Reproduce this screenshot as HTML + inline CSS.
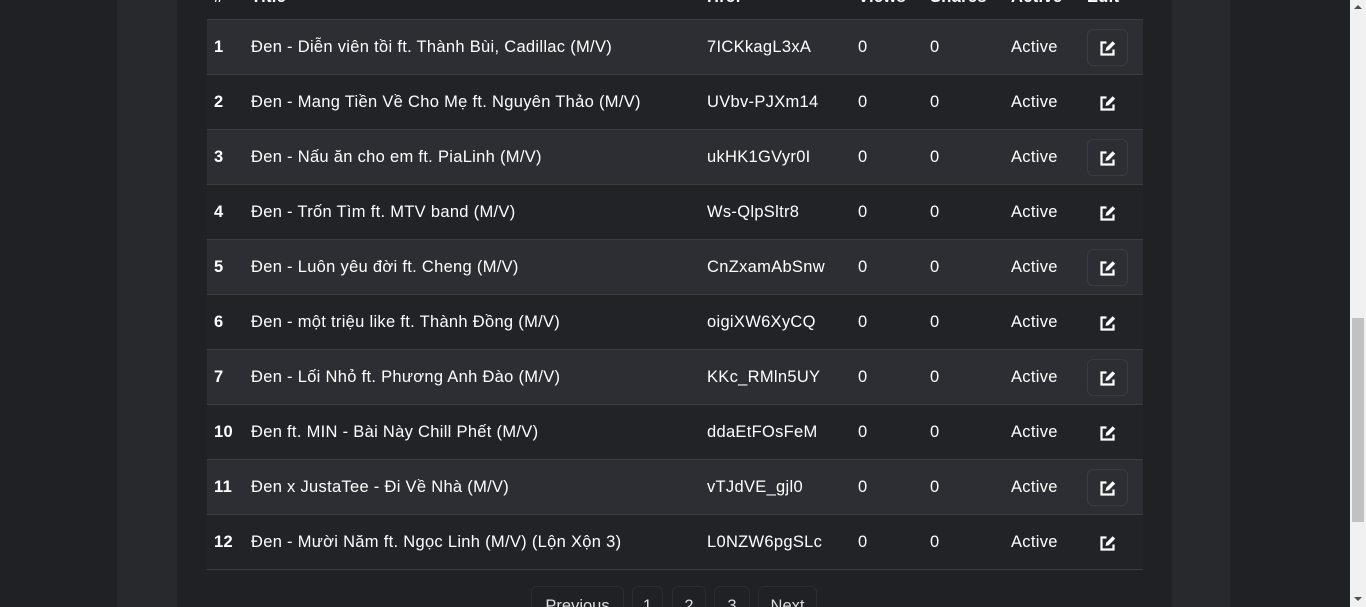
<!DOCTYPE html>
<html style="height:607px;overflow:hidden"><head><meta charset="utf-8"><style>
body{margin:0;width:1366px;height:607px;overflow:hidden;background:#202124;font-family:"Liberation Sans",sans-serif;color:#fff;position:relative}
.card{position:absolute;left:117px;top:0;width:1113px;height:607px;background:#28292c}
.inner{position:absolute;left:177px;top:0;width:995px;height:607px;background:#202124}
table{position:absolute;left:207px;top:-36px;width:936px;border-collapse:collapse;font-size:16.5px;letter-spacing:0.3px;table-layout:fixed}
td,th{box-sizing:border-box;padding:2px 0 0 0;text-align:left;height:55px;border-bottom:1px solid #3a3c40;white-space:nowrap}
th{font-weight:bold;vertical-align:bottom;padding:0 0 12px 0}
tr.o td{background:#2c2e33}
tr.e td{background:#212327}
td:first-child,th:first-child{padding-left:7px;font-weight:bold}
.btn{display:inline-block;width:41px;height:37px;border:1px solid #3a3c40;border-radius:6px;box-sizing:border-box;vertical-align:middle;position:relative}
.nb{border-color:transparent}
.btn svg{position:absolute;left:11px;top:9px}
.sb{position:absolute;left:1350px;top:0;width:16px;height:607px;background:#f1f1f1}
.th{position:absolute;left:1352px;top:318px;width:12px;height:204px;background:#c1c1c1}
.pg{position:absolute;top:586px;height:40px;border:1px solid #2a2c30;border-radius:6px;box-sizing:border-box;font-size:16.5px;color:#ddd;text-align:center;line-height:34px;padding-top:2px}
</style></head><body>
<div class="card"></div><div class="inner"></div>
<table>
<colgroup><col style="width:44px"><col style="width:456px"><col style="width:151px"><col style="width:72px"><col style="width:81px"><col style="width:76px"><col></colgroup>
<tr><th>#</th><th>Title</th><th>Href</th><th>Views</th><th>Shares</th><th>Active</th><th>Edit</th></tr>
<tr class="o"><td>1</td><td>Đen - Diễn viên tồi ft. Thành Bùi, Cadillac (M/V)</td><td>7ICKkagL3xA</td><td>0</td><td>0</td><td>Active</td><td><span class="btn"><svg width="18" height="18" viewBox="0 0 18 18"><path d="M7.5 3.5H2.5v12h12V10.5" fill="none" stroke="#fff" stroke-width="2.2"/><path d="M6.5 12l.7-3.2 6.5-6.5 2.5 2.5-6.5 6.5z" fill="#fff"/></svg></span></td></tr>
<tr class="e"><td>2</td><td>Đen - Mang Tiền Về Cho Mẹ ft. Nguyên Thảo (M/V)</td><td>UVbv-PJXm14</td><td>0</td><td>0</td><td>Active</td><td><span class="btn nb"><svg width="18" height="18" viewBox="0 0 18 18"><path d="M7.5 3.5H2.5v12h12V10.5" fill="none" stroke="#fff" stroke-width="2.2"/><path d="M6.5 12l.7-3.2 6.5-6.5 2.5 2.5-6.5 6.5z" fill="#fff"/></svg></span></td></tr>
<tr class="o"><td>3</td><td>Đen - Nấu ăn cho em ft. PiaLinh (M/V)</td><td>ukHK1GVyr0I</td><td>0</td><td>0</td><td>Active</td><td><span class="btn"><svg width="18" height="18" viewBox="0 0 18 18"><path d="M7.5 3.5H2.5v12h12V10.5" fill="none" stroke="#fff" stroke-width="2.2"/><path d="M6.5 12l.7-3.2 6.5-6.5 2.5 2.5-6.5 6.5z" fill="#fff"/></svg></span></td></tr>
<tr class="e"><td>4</td><td>Đen - Trốn Tìm ft. MTV band (M/V)</td><td>Ws-QlpSltr8</td><td>0</td><td>0</td><td>Active</td><td><span class="btn nb"><svg width="18" height="18" viewBox="0 0 18 18"><path d="M7.5 3.5H2.5v12h12V10.5" fill="none" stroke="#fff" stroke-width="2.2"/><path d="M6.5 12l.7-3.2 6.5-6.5 2.5 2.5-6.5 6.5z" fill="#fff"/></svg></span></td></tr>
<tr class="o"><td>5</td><td>Đen - Luôn yêu đời ft. Cheng (M/V)</td><td>CnZxamAbSnw</td><td>0</td><td>0</td><td>Active</td><td><span class="btn"><svg width="18" height="18" viewBox="0 0 18 18"><path d="M7.5 3.5H2.5v12h12V10.5" fill="none" stroke="#fff" stroke-width="2.2"/><path d="M6.5 12l.7-3.2 6.5-6.5 2.5 2.5-6.5 6.5z" fill="#fff"/></svg></span></td></tr>
<tr class="e"><td>6</td><td>Đen - một triệu like ft. Thành Đồng (M/V)</td><td>oigiXW6XyCQ</td><td>0</td><td>0</td><td>Active</td><td><span class="btn nb"><svg width="18" height="18" viewBox="0 0 18 18"><path d="M7.5 3.5H2.5v12h12V10.5" fill="none" stroke="#fff" stroke-width="2.2"/><path d="M6.5 12l.7-3.2 6.5-6.5 2.5 2.5-6.5 6.5z" fill="#fff"/></svg></span></td></tr>
<tr class="o"><td>7</td><td>Đen - Lối Nhỏ ft. Phương Anh Đào (M/V)</td><td>KKc_RMln5UY</td><td>0</td><td>0</td><td>Active</td><td><span class="btn"><svg width="18" height="18" viewBox="0 0 18 18"><path d="M7.5 3.5H2.5v12h12V10.5" fill="none" stroke="#fff" stroke-width="2.2"/><path d="M6.5 12l.7-3.2 6.5-6.5 2.5 2.5-6.5 6.5z" fill="#fff"/></svg></span></td></tr>
<tr class="e"><td>10</td><td>Đen ft. MIN - Bài Này Chill Phết (M/V)</td><td>ddaEtFOsFeM</td><td>0</td><td>0</td><td>Active</td><td><span class="btn nb"><svg width="18" height="18" viewBox="0 0 18 18"><path d="M7.5 3.5H2.5v12h12V10.5" fill="none" stroke="#fff" stroke-width="2.2"/><path d="M6.5 12l.7-3.2 6.5-6.5 2.5 2.5-6.5 6.5z" fill="#fff"/></svg></span></td></tr>
<tr class="o"><td>11</td><td>Đen x JustaTee - Đi Về Nhà (M/V)</td><td>vTJdVE_gjl0</td><td>0</td><td>0</td><td>Active</td><td><span class="btn"><svg width="18" height="18" viewBox="0 0 18 18"><path d="M7.5 3.5H2.5v12h12V10.5" fill="none" stroke="#fff" stroke-width="2.2"/><path d="M6.5 12l.7-3.2 6.5-6.5 2.5 2.5-6.5 6.5z" fill="#fff"/></svg></span></td></tr>
<tr class="e"><td>12</td><td>Đen - Mười Năm ft. Ngọc Linh (M/V) (Lộn Xộn 3)</td><td>L0NZW6pgSLc</td><td>0</td><td>0</td><td>Active</td><td><span class="btn nb"><svg width="18" height="18" viewBox="0 0 18 18"><path d="M7.5 3.5H2.5v12h12V10.5" fill="none" stroke="#fff" stroke-width="2.2"/><path d="M6.5 12l.7-3.2 6.5-6.5 2.5 2.5-6.5 6.5z" fill="#fff"/></svg></span></td></tr>
</table>
<div class="pg" style="left:531px;width:93px">Previous</div>
<div class="pg" style="left:632px;width:31px">1</div>
<div class="pg" style="left:672px;width:34px">2</div>
<div class="pg" style="left:714px;width:36px">3</div>
<div class="pg" style="left:758px;width:59px">Next</div>
<div class="sb"></div><div class="th"></div>
<div style="position:absolute;left:1354px;top:5px;border:4px solid transparent;border-bottom:4px solid #505050;border-top:0"></div>
<div style="position:absolute;left:1354px;top:597px;border:4px solid transparent;border-top:4px solid #505050;border-bottom:0"></div>
</body></html>
